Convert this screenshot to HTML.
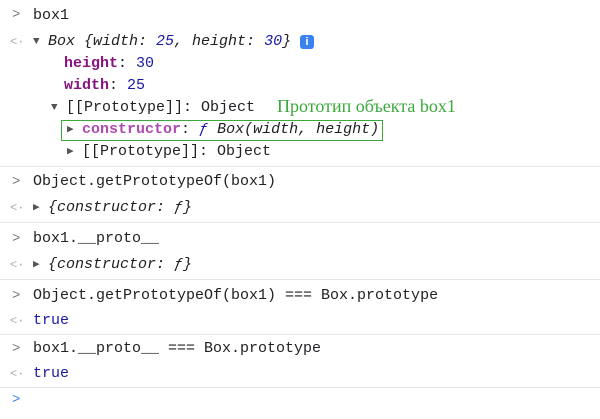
<!DOCTYPE html>
<html><head><meta charset="utf-8"><style>
body{margin:0;width:600px;height:419px;background:#fff;position:relative;overflow:hidden;font-family:"Liberation Mono",monospace;font-size:15px;color:#202124}
.l{position:absolute;white-space:pre;line-height:16px}
.sep{position:absolute;left:0;width:600px;height:1px;background:#e6e6e6}
.pr{position:absolute;left:12px;color:#777;font-size:14px;line-height:16px}
.bk{position:absolute;left:10px;color:#aaa;font-size:12px;line-height:16px}
.i{font-style:italic}
.n{color:#1a1aa6}
.k{color:#881280;font-weight:bold}
.kp{color:#b04ab0;font-weight:bold}
.tri{display:inline-block;width:15px;color:#555;font-size:11px;vertical-align:1px}
</style></head><body>
<div class="pr" style="top:7px">&gt;</div><div class="l" style="left:33px;top:8px">box1</div>
<div class="bk" style="top:34px">&lt;·</div>
<div class="l" style="left:33px;top:34px"><span class="tri">▼</span><span class="i">Box {width: <span class="n">25</span>, height: <span class="n">30</span>}</span></div>
<div style="position:absolute;left:300px;top:35px;width:14px;height:14px;background:#3b82f0;border-radius:3px;color:#fff;font:bold 11px 'Liberation Sans',sans-serif;text-align:center;line-height:14px">i</div>
<div class="l" style="left:64px;top:56px"><span class="k">height</span>: <span class="n">30</span></div>
<div class="l" style="left:64px;top:78px"><span class="k">width</span>: <span class="n">25</span></div>
<div class="l" style="left:51px;top:100px"><span class="tri">▼</span>[[Prototype]]: Object</div>
<div style="position:absolute;left:277px;top:96px;font:18px 'Liberation Serif',serif;color:#3aa83a">Прототип объекта box1</div>
<div style="position:absolute;left:61px;top:120px;width:320px;height:19px;border:1px solid #3aa83a"></div>
<div class="l" style="left:67px;top:122px"><span class="tri">▶</span><span class="kp">constructor</span>: <span class="i"><span class="n">ƒ</span> Box(width, height)</span></div>
<div class="l" style="left:67px;top:144px"><span class="tri">▶</span>[[Prototype]]: Object</div>
<div class="sep" style="top:166px"></div>
<div class="pr" style="top:174px">&gt;</div><div class="l" style="left:33px;top:174px">Object.getPrototypeOf(box1)</div>
<div class="bk" style="top:200px">&lt;·</div><div class="l" style="left:33px;top:200px"><span class="tri">▶</span><span class="i">{constructor: ƒ}</span></div>
<div class="sep" style="top:222px"></div>
<div class="pr" style="top:231px">&gt;</div><div class="l" style="left:33px;top:231px">box1.__proto__</div>
<div class="bk" style="top:257px">&lt;·</div><div class="l" style="left:33px;top:257px"><span class="tri">▶</span><span class="i">{constructor: ƒ}</span></div>
<div class="sep" style="top:279px"></div>
<div class="pr" style="top:288px">&gt;</div><div class="l" style="left:33px;top:288px">Object.getPrototypeOf(box1) === Box.prototype</div>
<div class="bk" style="top:313px">&lt;·</div><div class="l n" style="left:33px;top:313px">true</div>
<div class="sep" style="top:334px"></div>
<div class="pr" style="top:341px">&gt;</div><div class="l" style="left:33px;top:341px">box1.__proto__ === Box.prototype</div>
<div class="bk" style="top:366px">&lt;·</div><div class="l n" style="left:33px;top:366px">true</div>
<div class="sep" style="top:387px"></div>
<div class="pr" style="top:392px;color:#3b82f0">&gt;</div>
</body></html>
